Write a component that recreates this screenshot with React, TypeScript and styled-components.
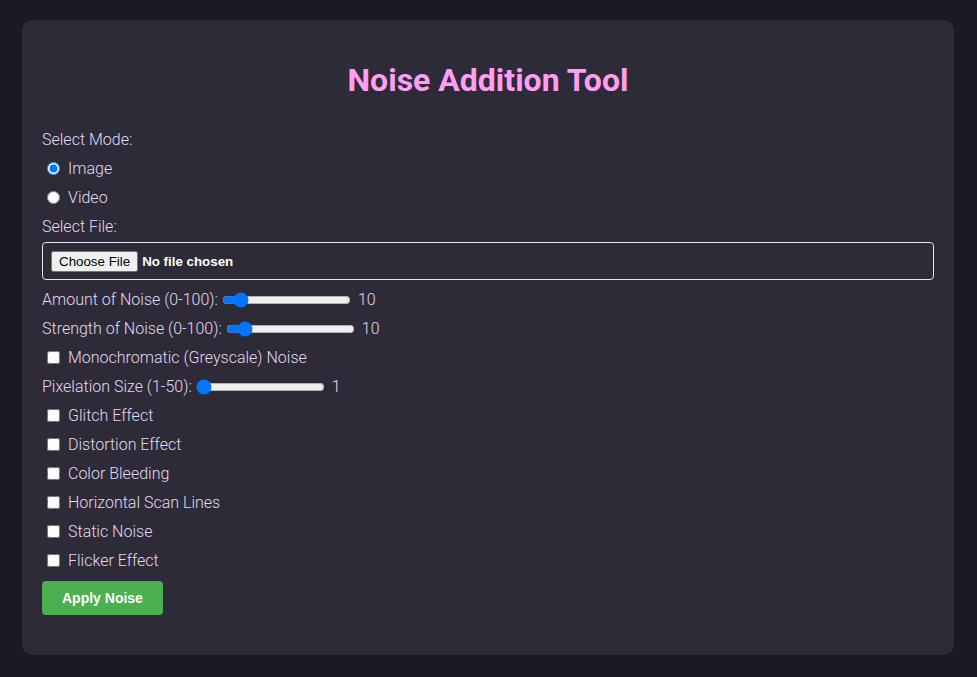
import React, { useState } from "react";
import styled, { createGlobalStyle } from "styled-components";

const GlobalStyle = createGlobalStyle`
  html, body {
    margin: 0;
    padding: 0;
    background: #1a1a25;
  }
  body {
    padding: 20px 23px 22px 22px;
    font-family: Roboto, "Liberation Sans", sans-serif;
  }
`;

const Card = styled.div`
  background: #2d2b37;
  border-radius: 10px;
  padding: 20px 20px 20px;
  color: #e4d9f4;
  font-weight: 300;
  font-size: 16px;
`;

const Title = styled.h1`
  margin: 21px 0 0;
  font-size: 32px;
  line-height: 38px;
  font-weight: 700;
  color: #ff9ff3;
  text-align: center;
`;

const Form = styled.form`
  display: flex;
  flex-direction: column;
  align-items: flex-start;
  margin-top: 21px;
`;

const Row = styled.label`
  display: flex;
  align-items: center;
  height: 19px;
  line-height: 19px;
  margin-top: 10px;
  white-space: pre;
`;

const CheckRow = styled.label`
  display: flex;
  align-items: center;
  gap: 8px;
  height: 19px;
  line-height: 19px;
  margin-top: 10px;
`;

const Tick = styled.input`
  margin: 0 0 0 5px;
  width: 13px;
  height: 13px;
`;

const FileBox = styled.input`
  box-sizing: border-box;
  width: 100%;
  height: 38px;
  margin-top: 6px;
  padding: 8px;
  border: 1px solid #f6dff4;
  border-radius: 4px;
  background: transparent;
  color: #ffffff;
  font-family: "Liberation Sans", Arial, sans-serif;
  font-size: 13.33px;
  font-weight: 700;

  &::file-selector-button {
    font-weight: 400;
    font-family: "Liberation Sans", Arial, sans-serif;
    font-size: 13.33px;
  }
`;

const Slider = styled.input`
  margin: 0 2px 0 4px;
  width: 129px;
  height: 16px;
`;

const Value = styled.span`
  margin-left: 5px;
`;

const ApplyButton = styled.button`
  margin: 11px 0 20px;
  padding: 9px 20px;
  border: none;
  border-radius: 4px;
  background: #4caf50;
  color: #ffffff;
  font-family: "Liberation Sans", Arial, sans-serif;
  font-size: 14px;
  line-height: 16px;
  font-weight: 700;
  cursor: pointer;
`;

type RangeProps = { label: string; min: number; max: number; init: number };

const RangeRow = ({ label, min, max, init }: RangeProps) => {
  const [value, setValue] = useState(init);
  return (
    <Row>
      {label}
      <Slider
        type="range"
        min={min}
        max={max}
        value={value}
        onChange={(e) => setValue(Number(e.target.value))}
      />
      <Value>{value}</Value>
    </Row>
  );
};

const effects = [
  "Glitch Effect",
  "Distortion Effect",
  "Color Bleeding",
  "Horizontal Scan Lines",
  "Static Noise",
  "Flicker Effect",
];

export default function App() {
  const [mode, setMode] = useState("image");

  return (
    <>
      <GlobalStyle />
      <Card>
        <Title>Noise Addition Tool</Title>
        <Form onSubmit={(e) => e.preventDefault()}>
          <Row as="div">Select Mode:</Row>
          <CheckRow>
            <Tick
              type="radio"
              name="mode"
              checked={mode === "image"}
              onChange={() => setMode("image")}
            />
            Image
          </CheckRow>
          <CheckRow>
            <Tick
              type="radio"
              name="mode"
              checked={mode === "video"}
              onChange={() => setMode("video")}
            />
            Video
          </CheckRow>
          <Row as="div">Select File:</Row>
          <FileBox type="file" />
          <RangeRow label="Amount of Noise (0-100):" min={0} max={100} init={10} />
          <RangeRow label="Strength of Noise (0-100):" min={0} max={100} init={10} />
          <CheckRow>
            <Tick type="checkbox" />
            Monochromatic (Greyscale) Noise
          </CheckRow>
          <RangeRow label="Pixelation Size (1-50):" min={1} max={50} init={1} />
          {effects.map((name) => (
            <CheckRow key={name}>
              <Tick type="checkbox" />
              {name}
            </CheckRow>
          ))}
          <ApplyButton type="submit">Apply Noise</ApplyButton>
        </Form>
      </Card>
    </>
  );
}
